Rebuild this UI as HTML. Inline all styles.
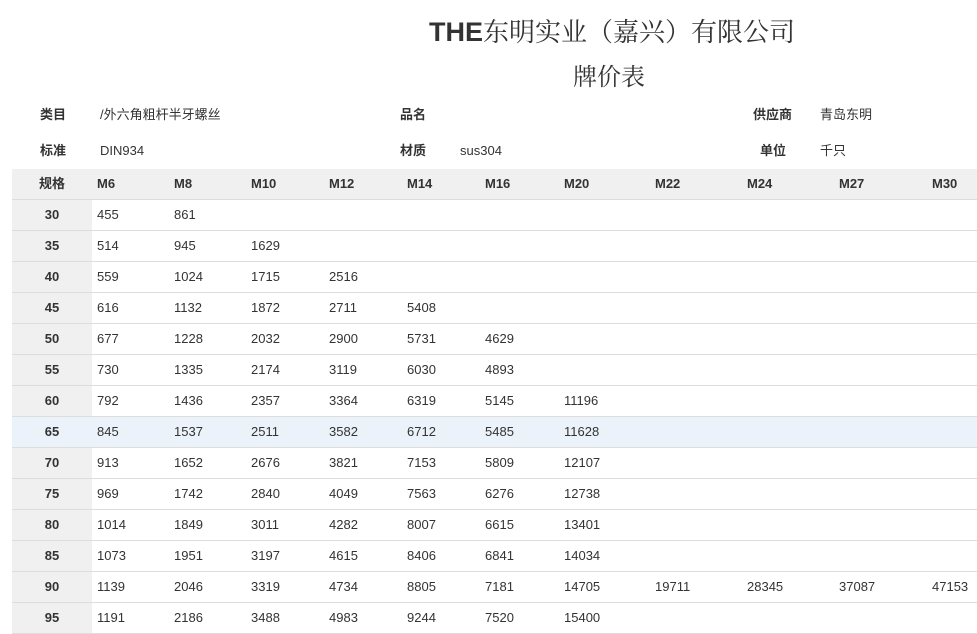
<!DOCTYPE html>
<html><head><meta charset="utf-8"><style>
body{margin:0;width:977px;height:628px;overflow:hidden;background:#fff;font-family:"Liberation Sans","Noto Sans CJK SC",sans-serif;color:#333;position:relative}
.a{position:absolute;white-space:nowrap}
.t1{left:429px;top:14px;font-size:26px;line-height:34px;color:#333}
.t1 b{font-family:"Liberation Sans",sans-serif;font-size:27px;font-weight:bold}
.t1 span{font-family:"Noto Serif CJK SC",serif}
.t2{left:573px;top:59px;font-size:24px;line-height:32px;font-family:"Noto Serif CJK SC",serif}
.lb{font-size:13px;font-weight:bold;line-height:16px}
.v{font-size:13px;line-height:16px}
.row{position:absolute;left:12px;width:965px;height:30px;border-bottom:1px solid #ddd;font-size:13px}
.row div{position:absolute;top:0;line-height:30px}
.row .k{left:0;width:80px;text-align:center;font-weight:bold;background:#f0f0f0;height:30px}
.hd{background:#f0f0f0;font-weight:bold}
.hl{background:#ebf2fa}
.hl .k{background:#ebf2fa}
</style></head><body>
<div class="a t1"><b>THE</b><span>东明实业（嘉兴）有限公司</span></div>
<div class="a t2">牌价表</div>
<div class="a lb" style="left:40px;top:107px">类目</div>
<div class="a v" style="left:100px;top:107px">/外六角粗杆半牙螺丝</div>
<div class="a lb" style="left:400px;top:107px">品名</div>
<div class="a lb" style="left:753px;top:107px">供应商</div>
<div class="a v" style="left:820px;top:107px">青岛东明</div>
<div class="a lb" style="left:40px;top:143px">标准</div>
<div class="a v" style="left:100px;top:143px">DIN934</div>
<div class="a lb" style="left:400px;top:143px">材质</div>
<div class="a v" style="left:460px;top:143px">sus304</div>
<div class="a lb" style="left:760px;top:143px">单位</div>
<div class="a v" style="left:820px;top:143px">千只</div>
<div id="t"></div>
<script>
var L=[85,162,239,317,395,473,552,643,735,827,920];
var H=["M6","M8","M10","M12","M14","M16","M20","M22","M24","M27","M30"];
var D=[
[30,455,861],[35,514,945,1629],[40,559,1024,1715,2516],[45,616,1132,1872,2711,5408],
[50,677,1228,2032,2900,5731,4629],[55,730,1335,2174,3119,6030,4893],
[60,792,1436,2357,3364,6319,5145,11196],[65,845,1537,2511,3582,6712,5485,11628],
[70,913,1652,2676,3821,7153,5809,12107],[75,969,1742,2840,4049,7563,6276,12738],
[80,1014,1849,3011,4282,8007,6615,13401],[85,1073,1951,3197,4615,8406,6841,14034],
[90,1139,2046,3319,4734,8805,7181,14705,19711,28345,37087,47153],
[95,1191,2186,3488,4983,9244,7520,15400]];
var h='<div class="row hd" style="top:169px"><div class="k">规格</div>';
H.forEach(function(s,i){h+='<div style="left:'+L[i]+'px">'+s+'</div>'});
h+='</div>';
D.forEach(function(r,j){
h+='<div class="row'+(j==7?' hl':'')+'" style="top:'+(200+31*j)+'px"><div class="k">'+r[0]+'</div>';
for(var i=1;i<r.length;i++)h+='<div style="left:'+L[i-1]+'px">'+r[i]+'</div>';
h+='</div>';});
document.getElementById('t').innerHTML=h;
</script>
</body></html>
